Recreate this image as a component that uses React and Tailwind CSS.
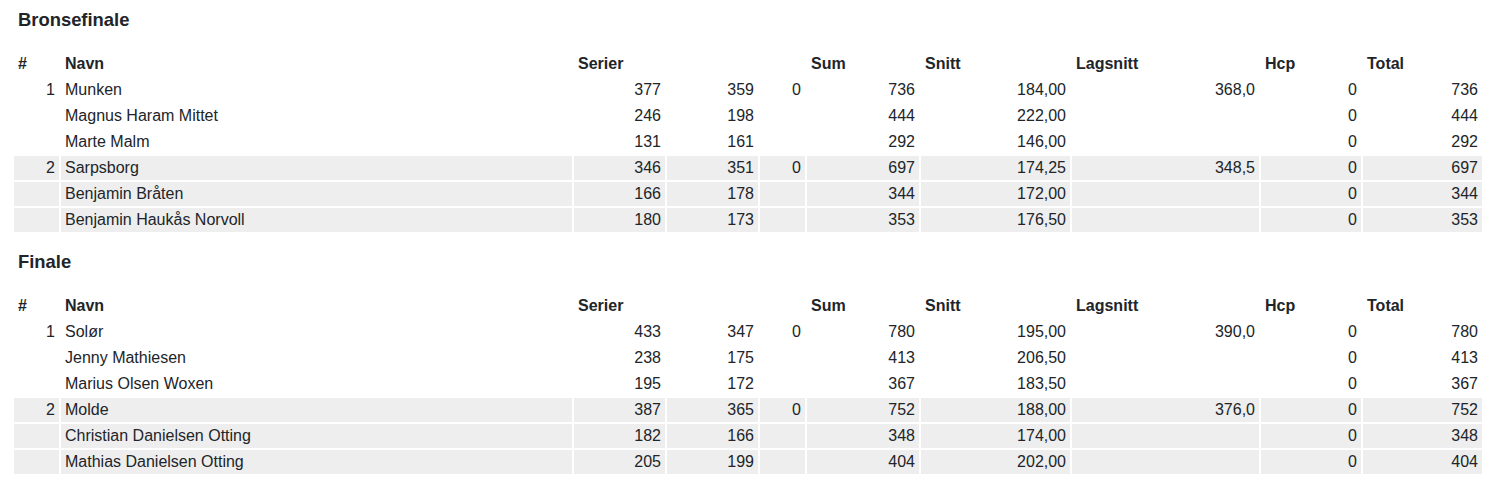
import React from "react";

const matches = [
  {
    title: "Bronsefinale",
    teams: [
      {
        rank: 1,
        name: "Munken",
        series: [377, 359, 0],
        sum: 736,
        snitt: "184,00",
        lagsnitt: "368,0",
        hcp: 0,
        total: 736,
        players: [
          { name: "Magnus Haram Mittet", series: [246, 198], sum: 444, snitt: "222,00", hcp: 0, total: 444 },
          { name: "Marte Malm", series: [131, 161], sum: 292, snitt: "146,00", hcp: 0, total: 292 },
        ],
      },
      {
        rank: 2,
        name: "Sarpsborg",
        series: [346, 351, 0],
        sum: 697,
        snitt: "174,25",
        lagsnitt: "348,5",
        hcp: 0,
        total: 697,
        players: [
          { name: "Benjamin Bråten", series: [166, 178], sum: 344, snitt: "172,00", hcp: 0, total: 344 },
          { name: "Benjamin Haukås Norvoll", series: [180, 173], sum: 353, snitt: "176,50", hcp: 0, total: 353 },
        ],
      },
    ],
  },
  {
    title: "Finale",
    teams: [
      {
        rank: 1,
        name: "Solør",
        series: [433, 347, 0],
        sum: 780,
        snitt: "195,00",
        lagsnitt: "390,0",
        hcp: 0,
        total: 780,
        players: [
          { name: "Jenny Mathiesen", series: [238, 175], sum: 413, snitt: "206,50", hcp: 0, total: 413 },
          { name: "Marius Olsen Woxen", series: [195, 172], sum: 367, snitt: "183,50", hcp: 0, total: 367 },
        ],
      },
      {
        rank: 2,
        name: "Molde",
        series: [387, 365, 0],
        sum: 752,
        snitt: "188,00",
        lagsnitt: "376,0",
        hcp: 0,
        total: 752,
        players: [
          { name: "Christian Danielsen Otting", series: [182, 166], sum: 348, snitt: "174,00", hcp: 0, total: 348 },
          { name: "Mathias Danielsen Otting", series: [205, 199], sum: 404, snitt: "202,00", hcp: 0, total: 404 },
        ],
      },
    ],
  },
];

const td = "h-[24px] p-0 px-[4px] leading-[24px] font-normal";

function Row({ bg, rank, name, series, sum, snitt, lagsnitt, hcp, total }) {
  return (
    <tr className={bg}>
      <td className={`${td} text-right`}>{rank}</td>
      <td className={`${td} text-left whitespace-nowrap`}>{name}</td>
      <td className={`${td} text-right`}>{series[0]}</td>
      <td className={`${td} text-right`}>{series[1]}</td>
      <td className={`${td} text-right`}>{series[2]}</td>
      <td className={`${td} text-right`}>{sum}</td>
      <td className={`${td} text-right`}>{snitt}</td>
      <td className={`${td} text-right`}>{lagsnitt}</td>
      <td className={`${td} text-right`}>{hcp}</td>
      <td className={`${td} text-right`}>{total}</td>
    </tr>
  );
}

function MatchTable({ match, last }) {
  return (
    <div className={last ? "" : "mb-[17px]"}>
      <h5 className="pl-[6px] text-[18.4px] leading-[22px] font-bold mb-[19px]">{match.title}</h5>
      <table className="table-fixed border-separate border-spacing-[2px] w-[1472px]">
        <colgroup>
          <col className="w-[45px]" />
          <col className="w-[511px]" />
          <col className="w-[91px]" />
          <col className="w-[91px]" />
          <col className="w-[45px]" />
          <col className="w-[112px]" />
          <col className="w-[149px]" />
          <col className="w-[187px]" />
          <col className="w-[100px]" />
          <col className="w-[119px]" />
        </colgroup>
        <thead>
          <tr>
            <th className={`${td} !font-bold text-left`}>#</th>
            <th className={`${td} !font-bold text-left`}>Navn</th>
            <th colSpan={3} className={`${td} !font-bold text-left`}>Serier</th>
            <th className={`${td} !font-bold text-left`}>Sum</th>
            <th className={`${td} !font-bold text-left`}>Snitt</th>
            <th className={`${td} !font-bold text-left`}>Lagsnitt</th>
            <th className={`${td} !font-bold text-left`}>Hcp</th>
            <th className={`${td} !font-bold text-left`}>Total</th>
          </tr>
        </thead>
        <tbody>
          {match.teams.map((team, i) => {
            const bg = i % 2 === 1 ? "bg-[#eeeeee]" : "";
            return (
              <React.Fragment key={team.name}>
                <Row bg={bg} {...team} />
                {team.players.map((p) => (
                  <Row
                    key={p.name}
                    bg={bg}
                    rank=""
                    name={p.name}
                    series={[p.series[0], p.series[1], ""]}
                    sum={p.sum}
                    snitt={p.snitt}
                    lagsnitt=""
                    hcp={p.hcp}
                    total={p.total}
                  />
                ))}
              </React.Fragment>
            );
          })}
        </tbody>
      </table>
    </div>
  );
}

export default function App() {
  return (
    <div className="min-h-screen bg-white pl-[12px] pt-[9px] text-[16px] text-[#212529] font-['Liberation_Sans',Arial,sans-serif]">
      {matches.map((m, i) => (
        <MatchTable key={m.title} match={m} last={i === matches.length - 1} />
      ))}
    </div>
  );
}
